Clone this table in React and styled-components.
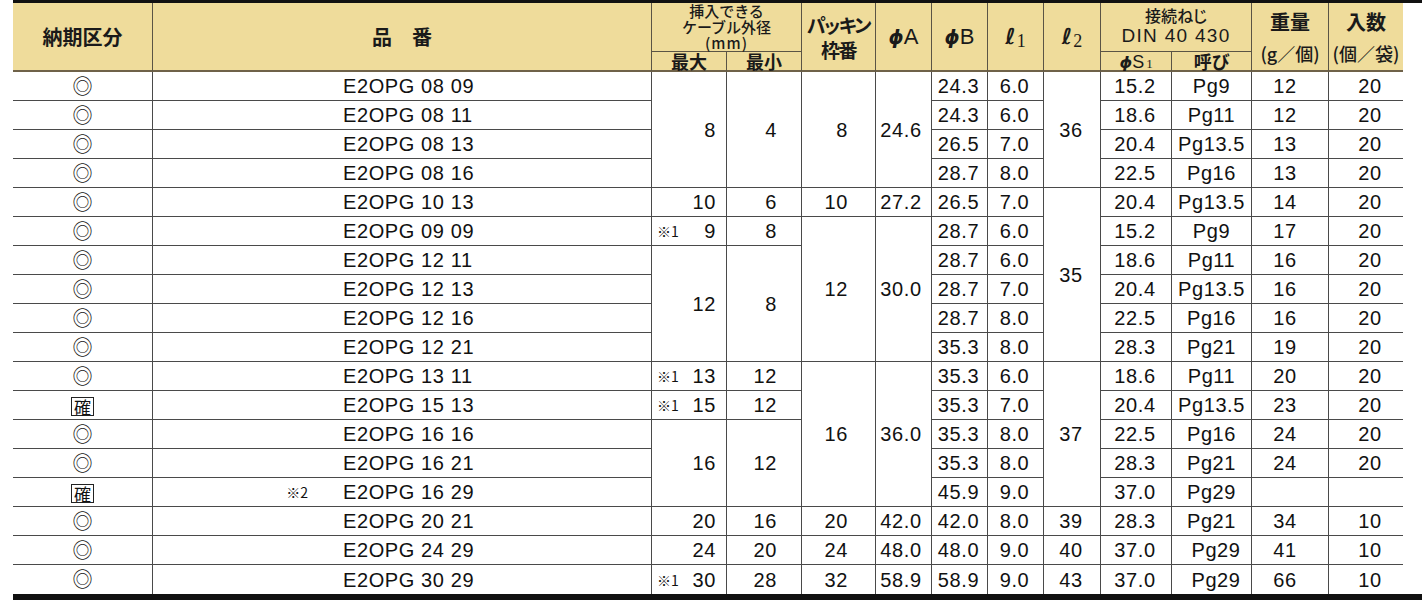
import React from "react";
import styled, { createGlobalStyle } from "styled-components";

const GlobalStyle = createGlobalStyle`
  html, body { margin: 0; padding: 0; background: #fff; }
  body {
    font-family: "Liberation Sans", "Noto Sans CJK JP", sans-serif;
    color: #111;
  }
`;

const LINE = "#4a4a4a";
const HEAD_LINE = "#5b5445";
const HEAD_BOTTOM = "#6f6249";

const Page = styled.div`
  padding-left: 13px;
`;

const Frame = styled.div`
  width: 1409px;
  border-top: 3px solid #111;
  border-bottom: 6px solid #111;
`;

const Table = styled.table`
  width: 1390px;
  table-layout: fixed;
  border-collapse: separate;
  border-spacing: 0;
  tbody tr:last-child td { border-bottom: none; }
`;

const HeadRow = styled.tr`
  height: ${(p) => p.$h}px;
`;

const BodyRow = styled.tr`
  height: 29px;
`;

const Th = styled.th`
  background: #efdc9b;
  padding: 0;
  font-family: "Noto Sans CJK JP", sans-serif;
  font-weight: 700;
  font-size: ${(p) => p.$size || 20}px;
  line-height: ${(p) => p.$lh || 24}px;
  color: #1a1a1a;
  text-align: center;
  vertical-align: ${(p) => (p.$top ? "top" : "middle")};
  font-feature-settings: "palt";
  border-right: ${(p) => (p.$last ? "none" : `1px solid ${HEAD_LINE}`)};
  border-bottom: ${(p) =>
    p.$group ? `1px solid ${HEAD_LINE}` : `2px solid ${HEAD_BOTTOM}`};
  white-space: nowrap;
`;

const HeadBox = styled.div`
  height: ${(p) => p.$h}px;
  display: flex;
  flex-direction: column;
  align-items: center;
  justify-content: center;
  line-height: ${(p) => p.$lh || 20}px;
`;

const SmallLines = styled.div`
  font-size: 15px;
  line-height: 16px;
  font-weight: 500;
  font-feature-settings: normal;
`;

const Paren = styled.span`
  letter-spacing: 1px;
`;

const PackLabel = styled.div`
  font-size: 19px;
  line-height: 25px;
  letter-spacing: -1.5px;
`;

const DinLines = styled.div`
  font-size: 16px;
  line-height: 20px;
  font-weight: 500;
  margin-top: -4px;
`;

const DinLatin = styled.span`
  font-family: "Liberation Sans", sans-serif;
  font-size: 19px;
  font-weight: 400;
  letter-spacing: 1.3px;
`;

const Stack = styled.div`
  display: flex;
  flex-direction: column;
  align-items: center;
  padding-top: ${(p) => p.$pt || 7}px;
  gap: ${(p) => p.$gap || 8}px;
`;

const Unit = styled.span`
  font-size: 18px;
  line-height: 22px;
  font-weight: 500;
`;

const Phi = styled.span`
  font-family: "DejaVu Sans", sans-serif;
  font-style: italic;
  font-weight: 700;
  font-size: ${(p) => p.$size || 19}px;
  line-height: 1;
`;

const Latin = styled.span`
  font-family: "Liberation Sans", sans-serif;
  font-weight: 400;
  font-size: ${(p) => p.$size || 22}px;
  line-height: 1;
`;

const Ell = styled.span`
  font-family: "DejaVu Sans", sans-serif;
  font-style: italic;
  font-weight: 700;
  font-size: 22px;
  line-height: 1;
`;

const EllSub = styled.span`
  font-family: "Liberation Serif", serif;
  font-weight: 400;
  font-size: 18px;
  line-height: 1;
  position: relative;
  top: 3px;
  margin-left: 1px;
`;

const SmallSub = styled.span`
  font-family: "Liberation Serif", serif;
  font-weight: 400;
  font-size: 13px;
  line-height: 1;
  margin-left: 2px;
`;

const Td = styled.td`
  padding: 0 ${(p) => p.$pr || 0}px 0 ${(p) => p.$pl || 0}px;
  font-size: 20px;
  letter-spacing: 0.6px;
  line-height: 20px;
  text-align: ${(p) => p.$align || "center"};
  vertical-align: middle;
  white-space: nowrap;
  border-bottom: 1px solid ${LINE};
  border-right: ${(p) => (p.$last ? "none" : `1px solid ${LINE}`)};
`;

const Circle = styled.span`
  font-family: "Noto Sans CJK JP", sans-serif;
  font-size: 20px;
  line-height: 1;
  letter-spacing: 0;
`;

const Kaku = styled.span`
  display: inline-block;
  font-family: "Noto Sans CJK JP", sans-serif;
  font-size: 17px;
  line-height: 17px;
  letter-spacing: 0;
  padding: 0 2px;
  border: 1px solid #222;
  vertical-align: middle;
`;

const CodeInner = styled.div`
  display: flex;
  align-items: center;
  padding-left: 130px;
`;

const NoteSlot = styled.span`
  width: 60px;
  box-sizing: border-box;
  padding-right: 35px;
  text-align: right;
  font-family: "Noto Sans CJK JP", sans-serif;
  font-size: 14px;
  letter-spacing: 0;
`;

const MaxInner = styled.div`
  display: flex;
  align-items: center;
  justify-content: ${(p) => (p.$note ? "space-between" : "flex-end")};
`;

const Note = styled.span`
  font-family: "Noto Sans CJK JP", sans-serif;
  font-size: 14px;
  letter-spacing: 0;
`;

const rows = [
  { s: "c", code: "E2OPG 08 09", max: { v: "8", span: 4 }, min: { v: "4", span: 4 }, pack: { v: "8", span: 4 }, a: { v: "24.6", span: 4 }, b: "24.3", l1: "6.0", l2: { v: "36", span: 4 }, s1: "15.2", call: "Pg9", w: "12", q: "20" },
  { s: "c", code: "E2OPG 08 11", b: "24.3", l1: "6.0", s1: "18.6", call: "Pg11", w: "12", q: "20" },
  { s: "c", code: "E2OPG 08 13", b: "26.5", l1: "7.0", s1: "20.4", call: "Pg13.5", w: "13", q: "20" },
  { s: "c", code: "E2OPG 08 16", b: "28.7", l1: "8.0", s1: "22.5", call: "Pg16", w: "13", q: "20" },
  { s: "c", code: "E2OPG 10 13", max: { v: "10" }, min: { v: "6" }, pack: { v: "10" }, a: { v: "27.2" }, b: "26.5", l1: "7.0", l2: { v: "35", span: 6 }, s1: "20.4", call: "Pg13.5", w: "14", q: "20" },
  { s: "c", code: "E2OPG 09 09", max: { v: "9", note: "※1" }, min: { v: "8" }, pack: { v: "12", span: 5 }, a: { v: "30.0", span: 5 }, b: "28.7", l1: "6.0", s1: "15.2", call: "Pg9", w: "17", q: "20" },
  { s: "c", code: "E2OPG 12 11", max: { v: "12", span: 4 }, min: { v: "8", span: 4 }, b: "28.7", l1: "6.0", s1: "18.6", call: "Pg11", w: "16", q: "20" },
  { s: "c", code: "E2OPG 12 13", b: "28.7", l1: "7.0", s1: "20.4", call: "Pg13.5", w: "16", q: "20" },
  { s: "c", code: "E2OPG 12 16", b: "28.7", l1: "8.0", s1: "22.5", call: "Pg16", w: "16", q: "20" },
  { s: "c", code: "E2OPG 12 21", b: "35.3", l1: "8.0", s1: "28.3", call: "Pg21", w: "19", q: "20" },
  { s: "c", code: "E2OPG 13 11", max: { v: "13", note: "※1" }, min: { v: "12" }, pack: { v: "16", span: 5 }, a: { v: "36.0", span: 5 }, b: "35.3", l1: "6.0", l2: { v: "37", span: 5 }, s1: "18.6", call: "Pg11", w: "20", q: "20" },
  { s: "k", code: "E2OPG 15 13", max: { v: "15", note: "※1" }, min: { v: "12" }, b: "35.3", l1: "7.0", s1: "20.4", call: "Pg13.5", w: "23", q: "20" },
  { s: "c", code: "E2OPG 16 16", max: { v: "16", span: 3 }, min: { v: "12", span: 3 }, b: "35.3", l1: "8.0", s1: "22.5", call: "Pg16", w: "24", q: "20" },
  { s: "c", code: "E2OPG 16 21", b: "35.3", l1: "8.0", s1: "28.3", call: "Pg21", w: "24", q: "20" },
  { s: "k", code: "E2OPG 16 29", codeNote: "※2", b: "45.9", l1: "9.0", s1: "37.0", call: "Pg29", w: "", q: "" },
  { s: "c", code: "E2OPG 20 21", max: { v: "20" }, min: { v: "16" }, pack: { v: "20" }, a: { v: "42.0" }, b: "42.0", l1: "8.0", l2: { v: "39" }, s1: "28.3", call: "Pg21", w: "34", q: "10" },
  { s: "c", code: "E2OPG 24 29", max: { v: "24" }, min: { v: "20" }, pack: { v: "24" }, a: { v: "48.0" }, b: "48.0", l1: "9.0", l2: { v: "40" }, s1: "37.0", call: "Pg29", callShift: 9, w: "41", q: "10" },
  { s: "c", code: "E2OPG 30 29", max: { v: "30", note: "※1" }, min: { v: "28" }, pack: { v: "32" }, a: { v: "58.9" }, b: "58.9", l1: "9.0", l2: { v: "43" }, s1: "37.0", call: "Pg29", callShift: 9, w: "66", q: "10" },
];

const widths = [140, 499, 75, 75, 74, 56, 56, 56, 57, 71, 80, 77, 74];

function Header() {
  return (
    <thead>
      <HeadRow $h={49}>
        <Th rowSpan={2}>
          <HeadBox $h={67} $lh={24}>納期区分</HeadBox>
        </Th>
        <Th rowSpan={2}>
          <HeadBox $h={67} $lh={24}>品　番</HeadBox>
        </Th>
        <Th colSpan={2} $group>
          <HeadBox $h={48}>
            <SmallLines>
              挿入できる
              <br />
              ケーブル外径
              <br />
              <Paren>(mm)</Paren>
            </SmallLines>
          </HeadBox>
        </Th>
        <Th rowSpan={2}>
          <HeadBox $h={67}>
            <PackLabel>
              パッキン
              <br />
              枠番
            </PackLabel>
          </HeadBox>
        </Th>
        <Th rowSpan={2}>
          <HeadBox $h={67}>
            <span>
              <Phi>ϕ</Phi>
              <Latin>A</Latin>
            </span>
          </HeadBox>
        </Th>
        <Th rowSpan={2}>
          <HeadBox $h={67}>
            <span>
              <Phi>ϕ</Phi>
              <Latin>B</Latin>
            </span>
          </HeadBox>
        </Th>
        <Th rowSpan={2}>
          <HeadBox $h={67}>
            <span>
              <Ell>ℓ</Ell>
              <EllSub>1</EllSub>
            </span>
          </HeadBox>
        </Th>
        <Th rowSpan={2}>
          <HeadBox $h={67}>
            <span>
              <Ell>ℓ</Ell>
              <EllSub>2</EllSub>
            </span>
          </HeadBox>
        </Th>
        <Th colSpan={2} $group>
          <HeadBox $h={48}>
            <DinLines>
              接続ねじ
              <br />
              <DinLatin>DIN 40 430</DinLatin>
            </DinLines>
          </HeadBox>
        </Th>
        <Th rowSpan={2} $top>
          <Stack>
            <span>重量</span>
            <Unit>(g／個)</Unit>
          </Stack>
        </Th>
        <Th rowSpan={2} $top $last>
          <Stack>
            <span>入数</span>
            <Unit>(個／袋)</Unit>
          </Stack>
        </Th>
      </HeadRow>
      <HeadRow $h={20}>
        <Th $size={18}>
          <HeadBox $h={18} $lh={18}>最大</HeadBox>
        </Th>
        <Th $size={18}>
          <HeadBox $h={18} $lh={18}>最小</HeadBox>
        </Th>
        <Th $size={18}>
          <HeadBox $h={18} $lh={18}>
            <span>
              <Phi $size={16}>ϕ</Phi>
              <Latin $size={18}>S</Latin>
              <SmallSub>1</SmallSub>
            </span>
          </HeadBox>
        </Th>
        <Th $size={18}>
          <HeadBox $h={18} $lh={18}>呼び</HeadBox>
        </Th>
      </HeadRow>
    </thead>
  );
}

function Row({ r }) {
  return (
    <BodyRow>
      <Td>{r.s === "k" ? <Kaku>確</Kaku> : <Circle>◎</Circle>}</Td>
      <Td $align="left">
        <CodeInner>
          <NoteSlot>{r.codeNote || ""}</NoteSlot>
          <span>{r.code}</span>
        </CodeInner>
      </Td>
      {r.max && (
        <Td rowSpan={r.max.span || 1} $pl={5} $pr={10}>
          <MaxInner $note={!!r.max.note}>
            {r.max.note && <Note>{r.max.note}</Note>}
            <span>{r.max.v}</span>
          </MaxInner>
        </Td>
      )}
      {r.min && (
        <Td rowSpan={r.min.span || 1} $align="right" $pr={24}>
          {r.min.v}
        </Td>
      )}
      {r.pack && (
        <Td rowSpan={r.pack.span || 1} $align="right" $pr={27}>
          {r.pack.v}
        </Td>
      )}
      {r.a && (
        <Td rowSpan={r.a.span || 1} $pr={5}>
          {r.a.v}
        </Td>
      )}
      <Td $pr={2}>{r.b}</Td>
      <Td $pr={2}>{r.l1}</Td>
      {r.l2 && (
        <Td rowSpan={r.l2.span || 1} $pr={2}>
          {r.l2.v}
        </Td>
      )}
      <Td $pr={2}>{r.s1}</Td>
      <Td $pl={r.callShift || 0}>{r.call}</Td>
      <Td $pr={10}>{r.w}</Td>
      <Td $pl={8} $last>
        {r.q}
      </Td>
    </BodyRow>
  );
}

export default function App() {
  return (
    <>
      <GlobalStyle />
      <Page>
        <Frame>
          <Table>
            <colgroup>
              {widths.map((w, i) => (
                <col key={i} style={{ width: w }} />
              ))}
            </colgroup>
            <Header />
            <tbody>
              {rows.map((r, i) => (
                <Row key={i} r={r} />
              ))}
            </tbody>
          </Table>
        </Frame>
      </Page>
    </>
  );
}
